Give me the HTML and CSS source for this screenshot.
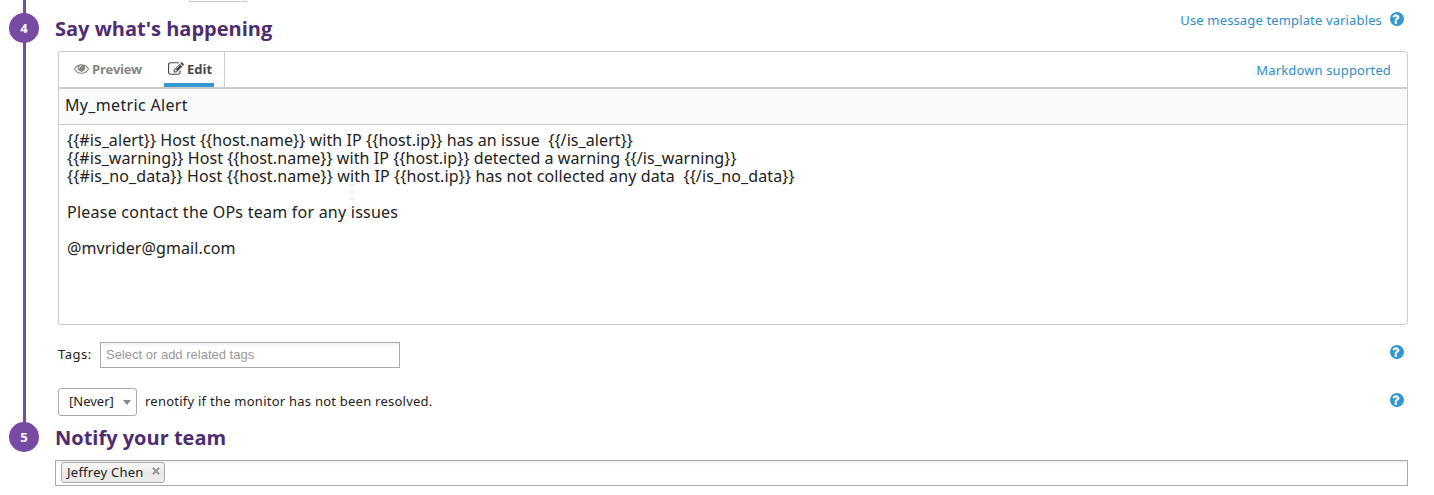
FILE: index.html
```html
<!DOCTYPE html>
<html lang="en">
<head>
<meta charset="utf-8">
<title>Monitor editor</title>
<link rel="stylesheet" href="styles.css">
</head>
<body>
<svg class="defs" width="0" height="0" aria-hidden="true">
  <symbol id="help" viewBox="128 128 1536 1536"><path d="M896 1376v-192q0-14-9-23t-23-9h-192q-14 0-23 9t-9 23v192q0 14 9 23t23 9h192q14 0 23-9t9-23zm256-672q0-88-55.500-163t-138.500-116-170-41q-243 0-371 213-15 24 8 42l132 100q7 6 19 6 16 0 25-12 53-68 86-92 34-24 86-24 48 0 85.500 26t37.500 59q0 38-20 61t-68 45q-63 28-115.500 86.500t-52.500 125.500v36q0 14 9 23t23 9h192q14 0 23-9t9-23q0-19 21.500-49.500t54.500-49.500q32-18 49-28.500t46-35 44.500-48 28-60.500 12.500-81zm512 192q0 209-103 385.500t-279.500 279.500-385.500 103-385.500-103-279.500-279.500-103-385.500 103-385.500 279.500-279.500 385.500-103 385.500 103 279.500 279.500 103 385.500z"/></symbol>
</svg>
<main class="page">
  <section class="step step-message">
    <div class="rail"><span class="badge">4</span></div>
    <div class="content">
      <div class="clipped-field"></div>
      <header class="step-head">
        <h2 class="title title-message">Say what's happening</h2>
        <a class="link template-link">Use message template variables</a>
        <svg class="help"><use href="#help"/></svg>
      </header>
      <div class="editor">
        <div class="toolbar">
          <div class="tabs">
            <a class="tab">
              <svg class="eye" viewBox="0 384 1792 1152"><path d="M1664 960q-152-236-381-353 61 104 61 225 0 185-131.500 316.500t-316.500 131.500-316.500-131.500-131.500-316.500q0-121 61-225-229 117-381 353 133 205 333.500 326.500t434.500 121.500 434.500-121.500 333.500-326.500zm-720-384q0-20-14-34t-34-14q-125 0-214.500 89.500t-89.500 214.500q0 20 14 34t34 14 34-14 14-34q0-86 61-147t147-61q20 0 34-14t14-34zm848 384q0 34-20 69-140 230-376.500 368.500t-499.500 138.500-499.500-139-376.500-368q-20-35-20-69t20-69q140-229 376.500-368t499.500-139 499.500 139 376.500 368q20 35 20 69z"/></svg>
              <span class="preview-label">Preview</span>
            </a>
            <a class="tab tab-active">
              <svg class="pencil" viewBox="0 128 1792 1408"><path d="M888 1184l116-116-152-152-116 116v56h96v96h56zm440-720q-16-16-33 1l-350 350q-17 17-1 33t33-1l350-350q17-17 1-33zm80 594v190q0 119-84.500 203.500t-203.500 84.500h-832q-119 0-203.500-84.500t-84.500-203.500v-832q0-119 84.500-203.500t203.500-84.500h832q63 0 117 25 15 7 18 23 3 17-9 29l-49 49q-14 14-32 8-23-6-45-6h-832q-66 0-113 47t-47 113v832q0 66 47 113t113 47h832q66 0 113-47t47-113v-126q0-13 9-22l64-64q15-15 35-7t20 29zm-96-738l288 288-672 672h-288v-288zm444 132l-92 92-288-288 92-92q28-28 68-28t68 28l152 152q28 28 28 68t-28 68z"/></svg>
              <span class="edit-label">Edit</span>
            </a>
          </div>
          <a class="link markdown-link">Markdown supported</a>
        </div>
        <div class="subject"><span class="subject-text">My_metric Alert</span></div>
        <div class="message">
          <div><span class="line-alert">{{#is_alert}} Host {{host.name}} with IP {{host.ip}} has an issue  {{/is_alert}}</span></div>
          <div><span class="line-warning">{{#is_warning}} Host {{host.name}} with IP {{host.ip}} detected a warning {{/is_warning}}</span></div>
          <div><span class="line-nodata">{{#is_no_data}} Host {{host.name}} with IP {{host.ip}} has not collected any data  {{/is_no_data}}</span></div>
          <div></div>
          <div><span class="line-contact">Please contact the OPs team for any issues</span></div>
          <div></div>
          <div><span class="line-mail">@mvrider@gmail.com</span></div>
          <svg class="caret" viewBox="0 0 8 16"><path d="M.5 .5h3M4.500 .5h3M4 1v14M.5 15.500h3M4.500 15.500h3"/></svg>
        </div>
      </div>
      <div class="row tags-row">
        <label class="tags-label">Tags:</label>
        <div class="tags-input"><span class="placeholder">Select or add related tags</span></div>
        <svg class="help"><use href="#help"/></svg>
      </div>
      <div class="row renotify-row">
        <div class="select"><span class="select-text">[Never]</span><i class="arrow"></i></div>
        <span class="renotify-text">renotify if the monitor has not been resolved.</span>
        <svg class="help"><use href="#help"/></svg>
      </div>
    </div>
  </section>
  <section class="step step-notify">
    <div class="rail rail-last"><span class="badge">5</span></div>
    <div class="content">
      <h2 class="title title-notify">Notify your team</h2>
      <div class="team-input">
        <span class="chip"><span class="chip-name">Jeffrey Chen</span><svg class="close" viewBox="0 0 8 8"><path d="M.8 .8l6.400 6.400M7.200 .8L.8 7.200"/></svg></span>
      </div>
    </div>
  </section>
</main>
</body>
</html>
```
FILE: styles.css
```css
* { box-sizing: border-box; }
body {
  margin: 0;
  background: #fff;
  color: #222;
  font: 13px/18px "Noto Sans", "Open Sans", sans-serif;
  overflow: hidden;
}
.defs { display: none; }
svg { display: block; flex: none; }
.page { width: 1434px; height: 495px; }
.step { display: grid; grid-template-columns: 55px 1fr; }
.step-message { height: 422px; }
.step-notify { height: 73px; }
.content { display: flex; flex-direction: column; padding-right: 26px; }
.rail {
  padding: 13px 0 0 9px;
  background: linear-gradient(#774aa4, #774aa4) 23px 0 / 3px 100% no-repeat;
}
.rail-last { padding-top: 0; background: none; }
.badge {
  display: flex;
  align-items: center;
  justify-content: center;
  width: 30px;
  height: 30px;
  border-radius: 50%;
  background: #774aa4;
  color: #fff;
  font: bold 13px/18px "Open Sans", sans-serif;
}
.clipped-field {
  width: 58px;
  height: 2px;
  margin-left: 134px;
  border: 1px solid #ccc;
  border-top: 0;
}
.step-head { display: flex; height: 49px; }
.title {
  margin: 0;
  color: #4d2d70;
  font: bold 20px/28px "Open Sans", sans-serif;
  white-space: nowrap;
}
.title-message { margin-top: 13px; }
.title-notify { height: 38px; padding-top: 2px; }
.link { color: #2e8dc4; white-space: nowrap; letter-spacing: 0.14px; }
.template-link { margin: 9px 8px 0 auto; }
.help { width: 14px; height: 14px; fill: #3399cf; margin-right: 4px; }
.step-head .help { margin-top: 10px; }
.editor {
  height: 274px;
  margin-left: 3px;
  border: 1px solid #ccc;
  border-radius: 3px;
}
.toolbar {
  display: flex;
  justify-content: space-between;
  height: 37px;
  border-bottom: 2px solid #ccc;
}
.tabs { display: flex; width: 166px; padding-left: 15px; border-right: 1px solid #ccc; }
.tab {
  display: flex;
  align-items: center;
  gap: 3px;
  height: 35px;
  padding-bottom: 2px;
  color: #858585;
  fill: #858585;
  font: bold 13px/18px "Open Sans", sans-serif;
}
.preview-label { letter-spacing: -0.28px; }
.tab-active {
  width: 50px;
  margin-left: 22px;
  padding: 2px 0 0 4px;
  border-bottom: 4px solid #3399cf;
  color: #484848;
  fill: #484848;
}
.eye { width: 15px; height: 10px; }
.pencil { width: 16px; height: 13px; }
.markdown-link { margin: 9px 16px 0 0; }
.subject {
  height: 36px;
  padding: 7px 6px;
  border-bottom: 1px solid #ccc;
  background: #f9fafc;
  font-size: 16px;
}
.subject-text { letter-spacing: 0.33px; }
.message {
  position: relative;
  padding: 6px 8px;
  font-size: 16px;
  line-height: 18px;
}
.message div { height: 18px; white-space: pre; }
.line-alert { letter-spacing: 0.08px; }
.line-warning { letter-spacing: 0.07px; }
.line-nodata { letter-spacing: 0.13px; }
.line-contact { letter-spacing: 0.24px; }
.line-mail { letter-spacing: 0.1px; }
.caret {
  position: absolute;
  left: 289px;
  top: 59px;
  width: 8px;
  height: 16px;
  fill: none;
  stroke: #eee;
}
.row { display: flex; align-items: center; margin-left: 3px; }
.row .help { margin-left: auto; }
.tags-row { height: 26px; margin-top: 17px; }
.tags-label { width: 42px; padding-bottom: 2px; letter-spacing: 0.5px; }
.tags-input, .team-input {
  height: 26px;
  border: 1px solid #aaa;
  background: linear-gradient(#eee 0, #fff 4px);
}
.tags-input {
  width: 300px;
  padding: 3px 5px;
  color: #999;
  font: 13px/18px "Liberation Sans", Arial, sans-serif;
}
.tags-row .help { margin-bottom: 6px; }
.renotify-row { height: 28px; margin-top: 20px; }
.select {
  display: flex;
  align-items: center;
  justify-content: space-between;
  width: 79px;
  height: 28px;
  margin-right: 8px;
  padding: 0 5px 0 10px;
  border: 1px solid #aaa;
  border-radius: 3px;
}
.select-text, .renotify-text { padding-bottom: 2px; }
.renotify-text { letter-spacing: 0.24px; }
.arrow { border: 4px solid transparent; border-top: 5px solid #888; border-bottom: 0; }
.renotify-row .help { margin-bottom: 4px; }
.team-input { padding: 1px 5px; }
.chip {
  display: inline-flex;
  width: 104px;
  height: 21px;
  padding: 0 4px 0 5px;
  justify-content: space-between;
  border: 1px solid #aaa;
  border-radius: 3px;
  background: linear-gradient(#f4f4f4 20%, #e8e8e8 55%, #eee);
}
.chip-name { letter-spacing: 0.25px; }
.close { width: 8px; height: 8px; margin-top: 4px; stroke: #999; stroke-width: 2; }
```
